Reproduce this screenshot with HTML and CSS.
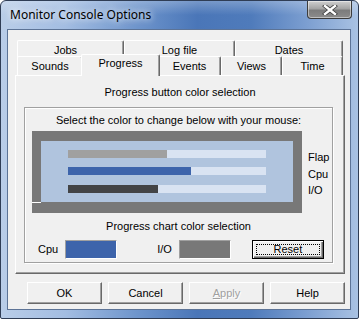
FILE: index.html
```html
<!DOCTYPE html>
<html>
<head>
<meta charset="utf-8">
<link rel="stylesheet" href="styles.css">
</head>
<body>
<div class="window">
  <div class="titlebar">
    <span class="title">Monitor Console Options</span>
    <span class="close"><svg width="16" height="10" viewBox="0 0 16 10"><path d="M3 1 L13 9 M13 1 L3 9" stroke="#3a3a3a" stroke-width="4" stroke-linecap="square"/><path d="M3 1 L13 9 M13 1 L3 9" stroke="#fff" stroke-width="2.4" stroke-linecap="square"/></svg></span>
  </div>
  <div class="client">
    <div class="tabs">
      <div class="tabrow back">
        <div class="tab w-jobs">Jobs</div>
        <div class="tab w-log">Log file</div>
        <div class="tab w-dates">Dates</div>
      </div>
      <div class="tabrow front">
        <div class="tab w-sounds">Sounds</div>
        <div class="tab selected w-progress">Progress</div>
        <div class="tab w-events">Events</div>
        <div class="tab w-views">Views</div>
        <div class="tab w-time">Time</div>
      </div>
      <div class="panel">
        <div class="heading">Progress button color selection</div>
        <div class="group">
          <div class="caption">Select the color to change below with your mouse:</div>
          <div class="chartrow">
            <div class="chart">
              <div class="chart-inner">
                <div class="track"><div class="fill fill-flap" style="width:99px"></div></div>
                <div class="track"><div class="fill fill-cpu" style="width:123px"></div></div>
                <div class="track third"><div class="fill fill-io" style="width:90px"></div></div>
              </div>
            </div>
            <div class="legend">
              <div>Flap</div>
              <div>Cpu</div>
              <div>I/O</div>
            </div>
          </div>
          <div class="caption2">Progress chart color selection</div>
          <div class="controls">
            <span class="lbl lbl-cpu">Cpu</span>
            <span class="swatch swatch-cpu"></span>
            <span class="lbl lbl-io">I/O</span>
            <span class="swatch swatch-io"></span>
            <span class="btn default reset"><span class="focus">Reset</span></span>
          </div>
        </div>
      </div>
    </div>
    <div class="buttons">
      <span class="btn big">OK</span>
      <span class="btn big">Cancel</span>
      <span class="btn big disabled"><u>A</u>pply</span>
      <span class="btn big">Help</span>
    </div>
  </div>
</div>
</body>
</html>
```
FILE: styles.css
```css
html, body { margin: 0; padding: 0; background: #fff; }
.window {
  width: 359px; height: 319px; box-sizing: border-box;
  border: 1px solid #2f3d55;
  border-radius: 6px 6px 2px 2px;
  background:
    linear-gradient(180deg, rgba(255,255,255,0.25) 0px, rgba(255,255,255,0) 14px),
    linear-gradient(90deg, #b9cde8 0%, #a3bde2 18%, #6e95cc 38%, #4a76b8 55%, #4f7bbb 70%, #7a9dd0 85%, #a9c2e3 100%);
  padding: 0 7px 8px 6px;
  display: flex; flex-direction: column;
  font-family: "Liberation Sans", Arial, sans-serif;
  font-size: 11px; color: #000;
}
.titlebar {
  height: 28px; display: flex; justify-content: space-between; align-items: flex-start;
}
.title {
  font-family: "Noto Sans", "Open Sans", sans-serif; font-size: 12px;
  margin: 6px 0 0 3px; line-height: 16px;
  text-shadow: 0 0 6px rgba(255,255,255,0.9), 0 0 10px rgba(255,255,255,0.7);
}
.close {
  width: 45px; height: 18px; margin-right: -1px; box-sizing: border-box;
  border: 1px solid #3c3c3c; border-top: none; border-radius: 0 0 4px 4px;
  background: linear-gradient(180deg, #d0d0d0 0%, #a4a4a4 45%, #7c7c7c 55%, #8c8c8c 100%);
  box-shadow: inset 0 0 0 1px rgba(255,255,255,0.45);
  display: flex; align-items: center; justify-content: center;
}
.client {
  flex: 1; background: #f0f0f0; box-sizing: border-box;
  border: 1px solid #5c7396;
  display: flex; flex-direction: column;
}
.tabs { margin: 10px 0 0 7px; width: 330px; }
.tabrow { display: flex; padding-left: 2px; }
.back { height: 17px; }
.front { height: 18px; align-items: flex-end; }
.tab {
  box-sizing: border-box; height: 100%;
  background: #f0f0f0;
  border-top: 1px solid #fff; border-left: 1px solid #fff; border-right: 1px solid #696969;
  box-shadow: inset -1px 0 0 #a0a0a0;
  border-radius: 2px 2px 0 0;
  display: flex; align-items: center; justify-content: center;
  line-height: 13px; padding-top: 1px;
}
.back .tab { height: 18px; }
.front .tab { height: 19px; }
.w-jobs { width: 107px; padding-right: 10px; }
.w-log { width: 111px; }
.w-dates { width: 108px; }
.w-sounds { width: 66px; }
.w-progress { width: 75px; }
.w-events { width: 63px; }
.w-views { width: 61px; }
.w-time { width: 61px; }
.tab.selected {
  position: relative; z-index: 1;
  width: 79px; height: 22px; margin: 0 -2px -1px -2px;
  padding-top: 0; padding-bottom: 4px;
  border-bottom: none;
}
.panel {
  box-sizing: border-box; height: 199px;
  border-top: 1px solid #fff; border-left: 1px solid #fff;
  border-right: 1px solid #696969; border-bottom: 1px solid #696969;
  box-shadow: inset -1px -1px 0 #a0a0a0;
  display: flex; flex-direction: column;
}
.heading { text-align: center; line-height: 13px; margin-top: 10px; }
.group {
  box-sizing: border-box; width: 309px; height: 156px;
  margin: 8px 0 0 8px;
  border: 1px solid #a0a0a0;
  box-shadow: inset 1px 1px 0 #fff, 1px 1px 0 #fff;
  display: flex; flex-direction: column;
}
.caption { text-align: center; line-height: 13px; margin-top: 6px; }
.chartrow { display: flex; margin: 4px 0 0 7px; }
.chart {
  width: 270px; height: 82px; box-sizing: border-box;
  background: #787878; padding: 10px 9px 11px 9px;
}
.chart-inner {
  position: relative;
  height: 61px; background: #b0c4de; box-sizing: border-box;
  padding: 9px 27px 0 27px;
  display: flex; flex-direction: column; gap: 9px;
}
.chart-inner::before {
  content: ""; position: absolute; left: -9px; bottom: -1px;
  width: 9px; height: 1px; background: #fff;
}
.track { height: 8px; background: #d9e3f2; display: flex; }
.track.third { margin-top: 1px; }
.fill { height: 100%; }
.fill-flap { background: #a0a0a0; }
.fill-cpu { background: #3d64ab; }
.fill-io { background: #434446; }
.legend {
  margin-left: 6px; padding-top: 18px;
  display: flex; flex-direction: column; line-height: 16.5px;
}
.caption2 { text-align: center; line-height: 13px; margin-top: 7px; }
.controls { display: flex; align-items: center; margin-top: 6px; height: 20px; }
.lbl { line-height: 13px; }
.lbl-cpu { margin-left: 13px; }
.lbl-io { margin-left: 40px; }
.swatch {
  width: 52px; height: 19px; box-sizing: border-box; margin-left: 7px;
  border-top: 1px solid #a0a0a0; border-left: 1px solid #a0a0a0;
  border-right: 1px solid #fff; border-bottom: 1px solid #fff;
}
.swatch-cpu { background: #3d64ab; }
.swatch-io { background: #787878; }
.btn {
  box-sizing: border-box; background: #f0f0f0;
  border-top: 1px solid #fff; border-left: 1px solid #fff;
  border-right: 1px solid #696969; border-bottom: 1px solid #696969;
  box-shadow: inset -1px -1px 0 #a0a0a0;
  display: flex; align-items: center; justify-content: center;
  line-height: 13px;
}
.reset {
  width: 72px; height: 19px; margin-left: 21px;
  border: 1px solid #000;
  box-shadow: inset 1px 1px 0 #fff, inset -1px -1px 0 #696969, inset -2px -2px 0 #a0a0a0;
  padding: 3px;
}
.focus {
  flex: 1; align-self: stretch; border: 1px dotted #000;
  display: flex; align-items: center; justify-content: center;
}
.buttons { display: flex; gap: 6px; margin: 8px 0 0 19px; }
.btn.big { width: 75px; height: 22px; }
.btn.disabled { color: #a0a0a0; text-shadow: 1px 1px 0 #fff; }
```
